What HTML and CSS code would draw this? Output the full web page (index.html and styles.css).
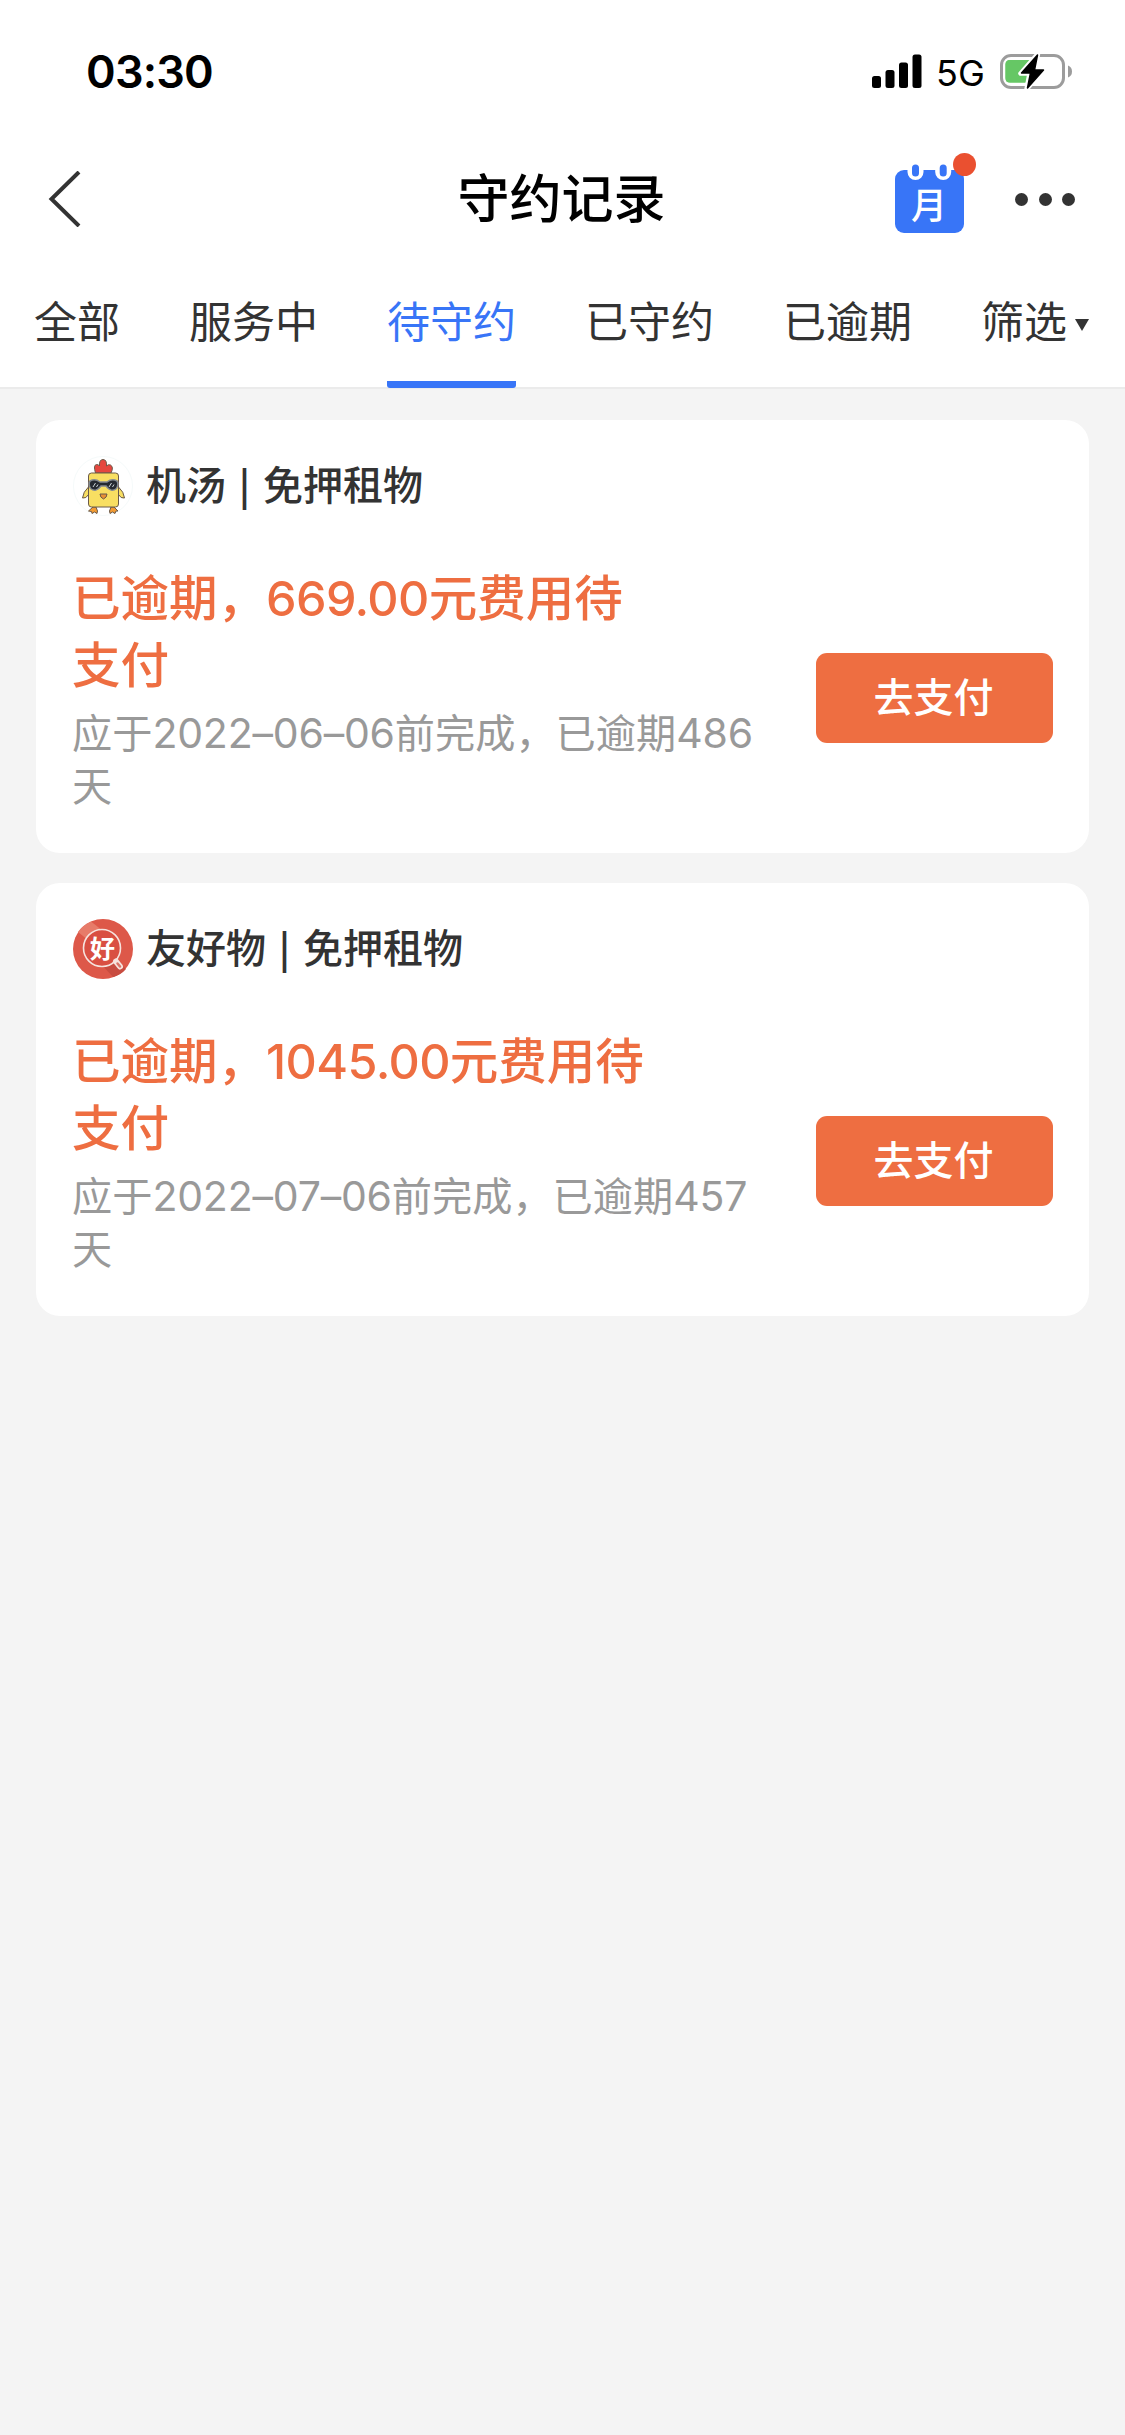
FILE: index.html
```html
<!DOCTYPE html>
<html lang="zh-CN">
<head>
<meta charset="utf-8">
<title>守约记录</title>
<link rel="stylesheet" href="styles.css">
</head>
<body>
<header class="top">
  <div class="status">
    <span class="time">03:30</span>
    <div class="status-right">
      <svg class="signal" width="50" height="34" viewBox="0 0 50 34">
        <rect x="0" y="22" width="9" height="12" rx="2.5"/>
        <rect x="13.5" y="16" width="9" height="18" rx="2.5"/>
        <rect x="27" y="8.5" width="9" height="25.5" rx="2.5"/>
        <rect x="40.5" y="0.5" width="9" height="33.5" rx="2.5"/>
      </svg>
      <span class="net">5G</span>
      <svg class="battery" width="73" height="38" viewBox="0 0 73 38">
        <rect x="1.5" y="3.5" width="62" height="32" rx="9.5" fill="#fff" stroke="#9c9c9c" stroke-width="3"/>
        <path d="M10 8H39V30.500H10Q5.500 30.500 5.500 26V12.500Q5.500 8 10 8Z" fill="#66c765"/>
        <path d="M33 8H52L41 31H26Z" fill="#fff"/>
        <path d="M5.500 26V12.500Q5.500 8 10 8H31L22 20V24L28 24L25.500 30.500H10Q5.500 30.500 5.500 26Z" fill="#66c765"/>
        <path d="M38 1.500L20.500 21.500H29.500L26.500 37.500L44 17.500H35.500Z" fill="#000" stroke="#fff" stroke-width="4.500" stroke-linejoin="round"/>
        <path d="M37.500 3L21.500 21H30.500L27.500 36L43.500 18H34.500Z" fill="#000" stroke="#000" stroke-width="1.500" stroke-linejoin="round"/>
        <path d="M68 13.500Q72 15 72 19.500T68 25.500Z" fill="#9c9c9c"/>
      </svg>
    </div>
  </div>
  <div class="nav">
    <svg class="back" width="34" height="56" viewBox="0 0 34 56">
      <path d="M31 1L3.500 28L31 55" fill="none" stroke="#333" stroke-width="4"/>
    </svg>
    <h1 class="title">守约记录</h1>
    <div class="nav-right">
      <div class="calendar">
        <svg width="69" height="70" viewBox="0 0 69 70">
          <rect x="0" y="7" width="69" height="63" rx="9" fill="#3875f7"/>
          <path d="M12.500 0H28.500V9A8 8 0 0 1 12.500 9ZM40.200 0H56.200V9A8 8 0 0 1 40.200 9Z" fill="#fff"/>
          <rect x="17" y="1.500" width="7" height="12" rx="3.500" fill="#3875f7"/>
          <rect x="44.700" y="1.500" width="7" height="12" rx="3.500" fill="#3875f7"/>
          <text class="calendar-text" x="34" y="56" text-anchor="middle">月</text>
        </svg>
        <i class="badge"></i>
      </div>
      <div class="more"><i></i><i></i><i></i></div>
    </div>
  </div>
  <nav class="tabs">
    <a class="tab">全部</a>
    <a class="tab">服务中</a>
    <a class="tab active">待守约</a>
    <a class="tab">已守约</a>
    <a class="tab">已逾期</a>
    <a class="tab filter">筛选<svg width="14" height="12" viewBox="0 0 14 12"><path d="M0 0H14L7 12Z" fill="#333"/></svg></a>
  </nav>
</header>
<main class="list">
  <section class="card">
    <div class="shop">
      <svg class="logo" width="60" height="60" viewBox="0 0 60 60">
        <circle cx="30" cy="30" r="29.500" fill="#fff" stroke="#f5fafa"/>
        <g stroke="#6b5a4a" stroke-width="1" stroke-linejoin="round">
          <path d="M22.500 17Q20 9 23.500 8.500Q26 8.500 26.500 10Q26 3.500 30 3.500T33.500 10Q35 8 37.500 9Q41 11 38 17Z" fill="#e5473f"/>
          <path d="M15.500 31Q10 36 9.500 42Q13 43 16 38ZM45.500 31Q51 36 51.500 42Q48 43 45 38Z" fill="#f8df62"/>
          <path d="M20 51L15.500 55L18.500 55.500L19 57.500L21.500 56L24 57.500L24.500 55L23 51ZM38 51L36.500 55L37 57.500L39.500 56L42 57.500L43 55L45 55L41 51Z" fill="#f39b32"/>
          <rect x="15.500" y="17" width="30" height="34" rx="3" fill="#f8df62"/>
          <path d="M27 38H34Q34 41.500 30.500 43Q27 41.500 27 38Z" fill="#e89134"/>
        </g>
        <path d="M17 25Q22 22 27 26H34Q39 22 44 25Q46 28 43.500 32.500Q38 37 33 30H28Q23 37 17.500 32.500Q15 28 17 25Z" fill="#252a31" stroke="#858b92" stroke-width="1.500"/>
        <path d="M20 31L22.500 27M23.500 31L25 28.500M36 31L38.500 27M39.500 31L41 28.500" stroke="#ccd4d8" stroke-width="1"/>
      </svg>
      <span>机汤</span><span class="bar">|</span><span>免押租物</span>
    </div>
    <div class="row">
      <div class="info">
        <p class="amount">已逾期，<b>669.00</b>元费用待支付</p>
        <p class="due">应于<b>2022–06–06</b>前完成，已逾期<b>486</b>天</p>
      </div>
      <button class="pay">去支付</button>
    </div>
  </section>
  <section class="card">
    <div class="shop">
      <svg class="logo" width="60" height="60" viewBox="0 0 60 60">
        <circle cx="30" cy="30" r="30" fill="#dd5849"/>
        <path d="M5 13A30 30 0 0 1 18 2.500L30 12L15 21Z" fill="#e77b69"/>
        <path d="M43 39L53 50Q48 56 40 58L28 45Z" fill="#c84c40"/>
        <circle cx="29" cy="29" r="18.500" fill="#d94f42" stroke="#f6e3de" stroke-width="1.600"/>
        <path d="M43 42.500L47 47.500" stroke="#f6e3de" stroke-width="6" stroke-linecap="round"/>
        <path d="M44.500 44.500L47 47.500" stroke="#d97468" stroke-width="2.500" stroke-linecap="round"/>
        <text class="logo-text" x="29.500" y="38.500" text-anchor="middle">好</text>
      </svg>
      <span>友好物</span><span class="bar">|</span><span>免押租物</span>
    </div>
    <div class="row">
      <div class="info">
        <p class="amount">已逾期，<b>1045.00</b>元费用待支付</p>
        <p class="due">应于<b>2022–07–06</b>前完成，已逾期<b>457</b>天</p>
      </div>
      <button class="pay">去支付</button>
    </div>
  </section>
</main>
</body>
</html>
```
FILE: styles.css
```css
* { box-sizing: border-box; }
body {
  margin: 0;
  min-height: 2435px;
  background: #f4f4f4;
  color: #333;
  font-family: "Noto Sans CJK SC", sans-serif;
}
svg { display: block; flex: none; }
.top { height: 389px; background: #fff; border-bottom: 2px solid #ebebeb; }

.status {
  display: flex;
  justify-content: space-between;
  height: 144px;
  padding: 0 52px 0 86px;
  color: #000;
  font-family: Inter, sans-serif;
}
.time { margin-top: 44px; font-size: 45px; line-height: 56px; font-weight: 600; letter-spacing: -0.8px; }
.status-right { display: flex; }
.signal { margin-top: 54px; }
.net { width: 48px; margin: 50px 16px 0 14px; font-size: 36px; line-height: 46px; white-space: nowrap; }
.battery { margin-top: 52px; }

.nav {
  display: grid;
  grid-template-columns: 1fr auto 1fr;
  height: 110px;
  padding: 0 50px 0 48px;
}
.back { margin-top: 27px; }
.title { margin: 14px 0 0; color: #000; font-size: 52px; line-height: 76px; font-weight: 500; }
.nav-right { display: flex; justify-content: flex-end; gap: 51px; }
.calendar { position: relative; width: 69px; height: 70px; margin-top: 19px; }
.calendar-text { fill: #fff; font-size: 36px; font-weight: 500; }
.badge {
  position: absolute;
  top: -10px;
  right: -12px;
  width: 23px;
  height: 23px;
  border-radius: 50%;
  background: #ea5030;
}
.more { display: flex; gap: 10.5px; margin-top: 49px; }
.more i { width: 13px; height: 13px; border-radius: 50%; background: #333; }

.tabs {
  display: flex;
  gap: 69px;
  height: 134px;
  padding: 0 34px;
  font-size: 43px;
  line-height: 62px;
  white-space: nowrap;
}
.tab { flex: none; height: 134px; padding-top: 34px; }
.active { color: #3875f7; border-bottom: 7px solid #3875f7; border-radius: 3px; }
.filter { display: flex; gap: 8px; }
.filter svg { margin-top: 31px; }

.list { display: flex; flex-direction: column; gap: 30px; padding: 31px 36px; }
.card { height: 433px; padding: 36px 36px 0 37px; border-radius: 24px; background: #fff; }
.shop { display: flex; align-items: center; height: 60px; font-size: 40px; line-height: 60px; font-weight: 500; }
.shop span { margin-top: -6px; }
.logo { margin-right: 13px; }
.logo-text { fill: #fff; font-size: 25px; font-weight: 700; }
.shop .bar { width: 37px; font-size: 37px; font-weight: 700; text-align: center; }
.row { display: flex; justify-content: space-between; margin-top: 46px; }
.info { width: 700px; margin-left: -1px; }
.amount, .due { margin: 0; }
.amount { width: 590px; color: #ee6e41; font-size: 48.500px; line-height: 67px; font-weight: 500; }
.due { margin-top: 8px; color: #999; font-size: 40.200px; line-height: 53px; }
b { font-family: Inter, sans-serif; font-weight: inherit; line-height: 0; }
.amount b { letter-spacing: -0.6px; }
.due b { font-size: 41px; letter-spacing: -0.2px; }
.pay {
  width: 237px;
  height: 90px;
  margin: 91px 0 0;
  padding: 0 2px 6px 0;
  border: 0;
  border-radius: 11px;
  background: #ee6e41;
  color: #fff;
  font: 500 40px/84px "Noto Sans CJK SC", sans-serif;
}
```
